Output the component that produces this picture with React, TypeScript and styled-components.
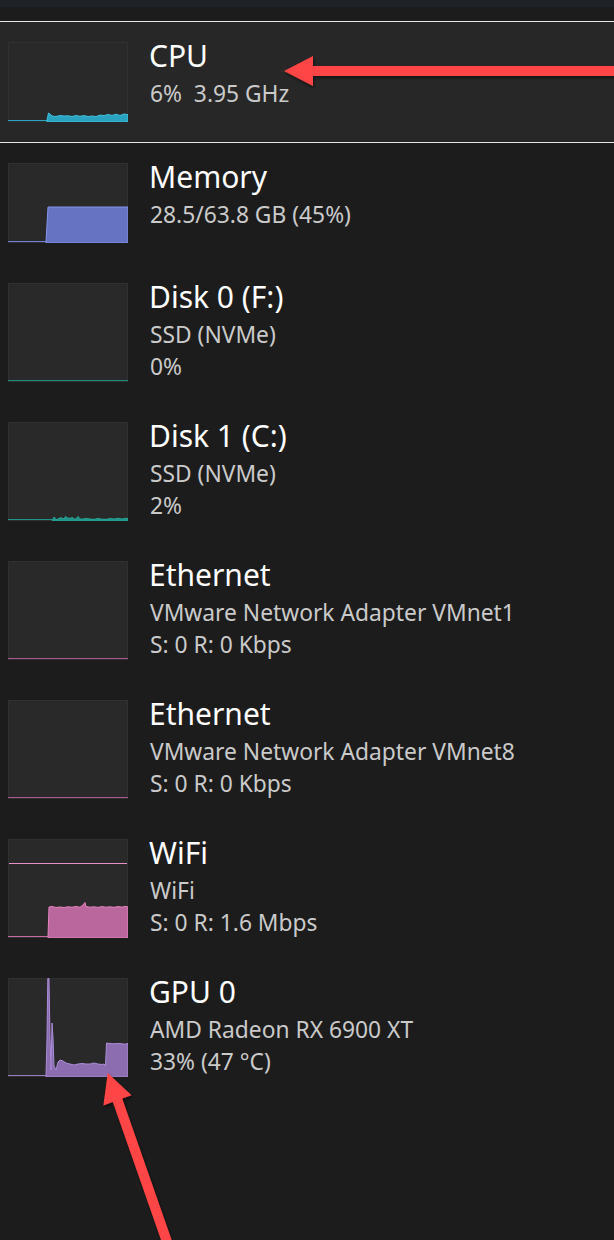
import React from "react";
import styled, { createGlobalStyle } from "styled-components";

const GlobalStyle = createGlobalStyle`
  html, body {
    margin: 0;
    padding: 0;
    background: #1c1c1c;
  }
  body {
    font-family: "Noto Sans", "Open Sans", sans-serif;
    -webkit-font-smoothing: antialiased;
  }
`;

const Page = styled.div`
  position: relative;
  width: 614px;
  height: 1240px;
  background: #1c1c1c;
  overflow: hidden;
`;

const TopStrip = styled.div`
  height: 7px;
  background: #1f2227;
`;

const Spacer = styled.div`
  height: 14px;
`;

const List = styled.div`
  display: flex;
  flex-direction: column;
`;

const Row = styled.div<{ $selected?: boolean }>`
  display: flex;
  align-items: flex-start;
  gap: 21px;
  padding: 20px 8px;
  background: ${(p) => (p.$selected ? "#272727" : "transparent")};
  border-top: ${(p) => (p.$selected ? "1px solid #e6e6e6" : "none")};
  border-bottom: ${(p) => (p.$selected ? "1px solid #e6e6e6" : "none")};
`;

const Thumb = styled.div<{ $h: number }>`
  flex: none;
  width: 120px;
  height: ${(p) => p.$h}px;
  background: #292929;
  box-shadow: inset 0 0 0 1px #303030;
  svg {
    display: block;
  }
`;

const Info = styled.div`
  display: flex;
  flex-direction: column;
  margin-top: -4px;
  margin-bottom: -8px;
`;

const Title = styled.div`
  font-size: 30px;
  line-height: 36px;
  color: #ffffff;
  white-space: nowrap;
`;

const Details = styled.div`
  display: flex;
  flex-direction: column;
  margin-top: 4px;
`;

const Detail = styled.div`
  font-size: 22.8px;
  line-height: 32px;
  color: #cacaca;
  white-space: nowrap;
  padding-left: 1px;
`;

const Overlay = styled.svg`
  position: absolute;
  left: 0;
  top: 0;
  pointer-events: none;
`;

type Chart = (h: number) => React.ReactNode;

const baseLine = (h: number, x2: number, color: string) => (
  <line x1={0} y1={h - 1.5} x2={x2} y2={h - 1.5} stroke={color} strokeWidth={1.2} />
);

const area = (d: string, fill: string, stroke: string) => (
  <path d={d} fill={fill} stroke={stroke} strokeWidth={1} strokeLinejoin="round" />
);

const cpuChart: Chart = (h) => (
  <>
    {baseLine(h, 40, "#2aa6c4")}
    {area(
      "M39,80 L39,78 L40.5,71 L42,72 L44,74 L48,74.5 L52,73.5 L56,74 L60,73.8 L64,74.5 L68,73.5 L72,74.3 L76,73.6 L80,74.5 L84,74 L88,74.6 L92,73 L96,73.6 L100,72.5 L104,73.4 L108,72.2 L112,73.5 L116,72 L120,72.6 L120,80 Z",
      "#2aa3c1",
      "#3fc0de"
    )}
  </>
);

const memChart: Chart = (h) => (
  <>
    {baseLine(h, 39, "#7480d8")}
    {area("M38,80 L38,78.5 L40,44 L120,44 L120,80 Z", "#6672c2", "#8593ea")}
  </>
);

const disk0Chart: Chart = (h) => <>{baseLine(h, 120, "#1f8a80")}</>;

const disk1Chart: Chart = (h) => (
  <>
    {baseLine(h, 120, "#1f9488")}
    {area(
      "M44,99 L45,97.5 L46,95 L48,97.5 L50,97 L52,96 L53,95.5 L55,97 L56,96.2 L58,94.6 L60,96.5 L61,95.8 L63,96.8 L64,95 L66,97.2 L68,96.8 L70,94.4 L72,96.9 L74,97.2 L78,96.5 L82,97 L86,97.4 L90,96.4 L94,97.2 L98,97.4 L102,96.5 L106,97.1 L110,96.2 L114,97.1 L118,96.2 L120,96.8 L120,99 Z",
      "#1f9488",
      "#26a596"
    )}
  </>
);

const ethChart: Chart = (h) => <>{baseLine(h, 120, "#a8588e")}</>;

const wifiChart: Chart = (h) => (
  <>
    <line x1={1} y1={24.5} x2={119} y2={24.5} stroke="#e990c8" strokeWidth={1} />
    {baseLine(h, 41, "#c86aa4")}
    {area(
      "M40,99 L40,97.5 L41,68 L44,67.5 L48,68.5 L52,68 L56,68.5 L60,67.8 L64,68.2 L68,67.5 L72,68.3 L75,66 L77,63.5 L78,67.5 L82,68.2 L86,67.8 L90,68.4 L94,67.6 L98,68.2 L102,67.8 L106,68.3 L110,67.6 L114,68.1 L118,67.4 L120,68 L120,99 Z",
      "#b9679d",
      "#e684be"
    )}
  </>
);

const gpuChart: Chart = (h) => (
  <>
    {baseLine(h, 39, "#9a7cc4")}
    {area(
      "M38,99 L38,97.5 L39,60 L39.8,0.5 L41,0.5 L42,60 L43,92 L44,45 L45,60 L46,88 L48,92 L50,84 L52,82 L55,83 L58,85 L62,86 L66,87 L70,86 L74,85.5 L78,86 L82,86 L86,85 L90,86 L94,86.5 L96,86 L97.5,88 L98.5,65 L102,65.5 L106,65.8 L110,65.4 L114,65.8 L117,66.2 L120,65.5 L120,99 Z",
      "#8b6db0",
      "#aa8cd8"
    )}
  </>
);

type Item = {
  title: string;
  details: string[];
  chart: Chart;
  selected?: boolean;
};

const items: Item[] = [
  { title: "CPU", details: ["6%\u00a0 3.95 GHz"], chart: cpuChart, selected: true },
  { title: "Memory", details: ["28.5/63.8 GB (45%)"], chart: memChart },
  { title: "Disk 0 (F:)", details: ["SSD (NVMe)", "0%"], chart: disk0Chart },
  { title: "Disk 1 (C:)", details: ["SSD (NVMe)", "2%"], chart: disk1Chart },
  { title: "Ethernet", details: ["VMware Network Adapter VMnet1", "S: 0 R: 0 Kbps"], chart: ethChart },
  { title: "Ethernet", details: ["VMware Network Adapter VMnet8", "S: 0 R: 0 Kbps"], chart: ethChart },
  { title: "WiFi", details: ["WiFi", "S: 0 R: 1.6 Mbps"], chart: wifiChart },
  { title: "GPU 0", details: ["AMD Radeon RX 6900 XT", "33% (47 °C)"], chart: gpuChart },
];

const PerfRow: React.FC<{ item: Item }> = ({ item }) => {
  const h = item.details.length > 1 ? 99 : 80;
  return (
    <Row $selected={item.selected}>
      <Thumb $h={h}>
        <svg width={120} height={h} viewBox={`0 0 120 ${h}`}>
          {item.chart(h)}
        </svg>
      </Thumb>
      <Info>
        <Title>{item.title}</Title>
        <Details>
          {item.details.map((d, i) => (
            <Detail key={i}>{d}</Detail>
          ))}
        </Details>
      </Info>
    </Row>
  );
};

const Arrows: React.FC = () => (
  <Overlay width={614} height={1240} viewBox="0 0 614 1240">
    <defs>
      <filter id="arrowShadow" x="-20%" y="-20%" width="140%" height="140%">
        <feDropShadow dx="1" dy="2" stdDeviation="1.5" floodColor="#000" floodOpacity="0.55" />
      </filter>
    </defs>
    <g fill="#ff4444" filter="url(#arrowShadow)">
      <path d="M284,71 L313,56 L313,66 L614,66 L614,76 L313,76 L313,86 Z" />
      <path d="M107.7,1073 L131.6,1095.2 L122.2,1098.6 L172.7,1243 L163.3,1246.4 L112.8,1102 L103.4,1105.4 Z" />
    </g>
  </Overlay>
);

export default function App() {
  return (
    <Page>
      <GlobalStyle />
      <TopStrip />
      <Spacer />
      <List>
        {items.map((it, i) => (
          <PerfRow key={i} item={it} />
        ))}
      </List>
      <Arrows />
    </Page>
  );
}
